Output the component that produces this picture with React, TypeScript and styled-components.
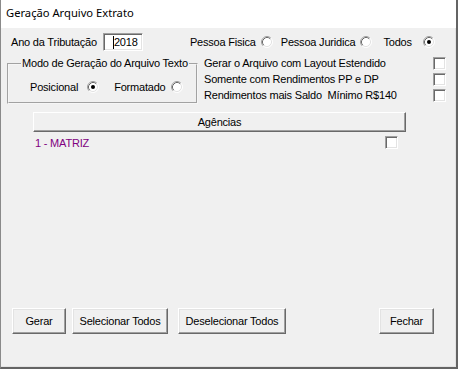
import React from 'react'
import styled, { createGlobalStyle } from 'styled-components'

const GlobalStyle = createGlobalStyle`
  html, body {
    margin: 0;
    padding: 0;
    background: #f0f0f0;
  }
  body {
    font-family: "Liberation Sans", Arial, sans-serif;
    font-size: 11px;
    letter-spacing: -0.2px;
    color: #000;
  }
`

const Window = styled.div`
  box-sizing: border-box;
  width: 458px;
  height: 369px;
  display: flex;
  flex-direction: column;
  border-left: 1px solid #8a8a8a;
  border-right: 2px solid #646464;
  border-bottom: 2px solid #646464;
  box-shadow: inset -1px -1px 0 #e3e3e3;
  background: #f0f0f0;
`

const TitleBar = styled.div`
  height: 28px;
  flex: none;
  background: #fff;
  display: flex;
  align-items: center;
  padding-left: 5px;
  padding-bottom: 4px;
  box-sizing: border-box;
  font-family: "Noto Sans", "Open Sans", sans-serif;
  font-size: 11.2px;
  letter-spacing: 0;
`

const Body = styled.div`
  flex: 1;
  display: flex;
  flex-direction: column;
  padding: 0 0 33px 6px;
`

const TopRow = styled.div`
  display: flex;
  align-items: center;
  height: 18px;
  margin-top: 5px;
  padding-left: 4px;
`

const FieldLabel = styled.span`
  margin-right: 6px;
`

const YearBox = styled.div`
  box-sizing: border-box;
  width: 40px;
  height: 18px;
  background: #fff;
  border: 1px solid;
  border-color: #a0a0a0 #fff #fff #a0a0a0;
  box-shadow: inset 1px 1px 0 #696969, inset -1px -1px 0 #e3e3e3;
  display: flex;
  align-items: center;
  padding-left: 9px;
`

const Caret = styled.span`
  display: inline-block;
  width: 1px;
  height: 13px;
  background: #000;
`

const RadioGroup = styled.div`
  display: flex;
  align-items: center;
  margin-left: 47px;
`

const RadioLabel = styled.span<{ $gap: number }>`
  margin-left: ${p => p.$gap}px;
`

const RadioBox = styled.span<{ $gap: number }>`
  display: inline-flex;
  width: 12px;
  height: 12px;
  margin-left: ${p => p.$gap}px;
`

const Radio = ({ checked, gap }: { checked?: boolean; gap: number }) => (
  <RadioBox $gap={gap}>
    <svg width="12" height="12" viewBox="0 0 12 12">
      <circle cx="6" cy="6" r="5" fill="#fff" />
      <path d="M2.11 9.89 A5.5 5.5 0 0 1 9.89 2.11" fill="none" stroke="#a0a0a0" />
      <path d="M9.89 2.11 A5.5 5.5 0 0 1 2.11 9.89" fill="none" stroke="#fff" />
      <path d="M2.82 9.18 A4.5 4.5 0 0 1 9.18 2.82" fill="none" stroke="#696969" />
      <path d="M9.18 2.82 A4.5 4.5 0 0 1 2.82 9.18" fill="none" stroke="#e3e3e3" />
      {checked && <circle cx="6" cy="6" r="2" fill="#000" />}
    </svg>
  </RadioBox>
)

const MiddleRow = styled.div`
  display: flex;
  margin-top: 4px;
`

const GroupBox = styled.fieldset`
  box-sizing: border-box;
  width: 191px;
  height: 47px;
  margin: 2px 0 0 0;
  padding: 0;
  border: 2px groove #f6f6f6;
  display: flex;
  align-items: center;
`

const GroupLegend = styled.legend`
  margin-left: 12px;
  padding: 0 1px;
  line-height: 13px;
`

const GroupContent = styled.div`
  display: flex;
  align-items: center;
  padding-left: 21px;
  margin-top: 2px;
`

const OptionList = styled.div`
  display: flex;
  flex-direction: column;
  width: 242px;
  margin-left: 6px;
`

const OptionRow = styled.div`
  display: flex;
  align-items: center;
  justify-content: space-between;
  height: 16px;
`

const CheckBox = styled.span`
  box-sizing: border-box;
  display: inline-block;
  width: 13px;
  height: 13px;
  background: #fff;
  border: 1px solid;
  border-color: #a0a0a0 #fff #fff #a0a0a0;
  box-shadow: inset 1px 1px 0 #696969, inset -1px -1px 0 #e3e3e3;
`

const ListHeader = styled.div`
  box-sizing: border-box;
  width: 373px;
  height: 20px;
  margin: 8px 0 0 26px;
  display: flex;
  align-items: center;
  justify-content: center;
  border: 1px solid;
  border-color: #fff #696969 #696969 #fff;
  box-shadow: inset -1px -1px 0 #a0a0a0;
  background: #f0f0f0;
`

const AgencyRow = styled.div`
  display: flex;
  align-items: center;
  justify-content: space-between;
  width: 363px;
  height: 15px;
  margin: 3px 0 0 28px;
`

const AgencyName = styled.span`
  color: #800080;
`

const ButtonBar = styled.div`
  display: flex;
  align-items: center;
  margin-top: auto;
  padding-left: 5px;
`

const Button = styled.button<{ $w: number; $ml?: number }>`
  box-sizing: border-box;
  width: ${p => p.$w}px;
  height: 26px;
  margin: 0 0 0 ${p => p.$ml ?? 0}px;
  padding: 0;
  font: inherit;
  letter-spacing: inherit;
  color: #000;
  background: #f0f0f0;
  border: 1px solid;
  border-color: #fff #696969 #696969 #fff;
  box-shadow: inset -1px -1px 0 #a0a0a0, inset 1px 1px 0 #e3e3e3;
`

export default function App() {
  return (
    <>
      <GlobalStyle />
      <Window>
        <TitleBar>Geração Arquivo Extrato</TitleBar>
        <Body>
          <TopRow>
            <FieldLabel>Ano da Tributação</FieldLabel>
            <YearBox><Caret />2018</YearBox>
            <RadioGroup>
              <RadioLabel $gap={0}>Pessoa Fisica</RadioLabel>
              <Radio gap={5} />
              <RadioLabel $gap={8}>Pessoa Juridica</RadioLabel>
              <Radio gap={5} />
              <RadioLabel $gap={11}>Todos</RadioLabel>
              <Radio gap={11} checked />
            </RadioGroup>
          </TopRow>

          <MiddleRow>
            <GroupBox>
              <GroupLegend>Modo de Geração do Arquivo Texto</GroupLegend>
              <GroupContent>
                <span>Posicional</span>
                <Radio gap={9} checked />
                <RadioLabel $gap={15}>Formatado</RadioLabel>
                <Radio gap={5} />
              </GroupContent>
            </GroupBox>
            <OptionList>
              <OptionRow>Gerar o Arquivo com Layout Estendido<CheckBox /></OptionRow>
              <OptionRow>Somente com Rendimentos PP e DP<CheckBox /></OptionRow>
              <OptionRow>Rendimentos mais Saldo&nbsp; Mínimo R$140<CheckBox /></OptionRow>
            </OptionList>
          </MiddleRow>

          <ListHeader>Agências</ListHeader>
          <AgencyRow>
            <AgencyName>1 - MATRIZ</AgencyName>
            <CheckBox />
          </AgencyRow>

          <ButtonBar>
            <Button $w={54}>Gerar</Button>
            <Button $w={96} $ml={6}>Selecionar Todos</Button>
            <Button $w={108} $ml={10}>Deselecionar Todos</Button>
            <Button $w={55} $ml={93}>Fechar</Button>
          </ButtonBar>
        </Body>
      </Window>
    </>
  )
}
